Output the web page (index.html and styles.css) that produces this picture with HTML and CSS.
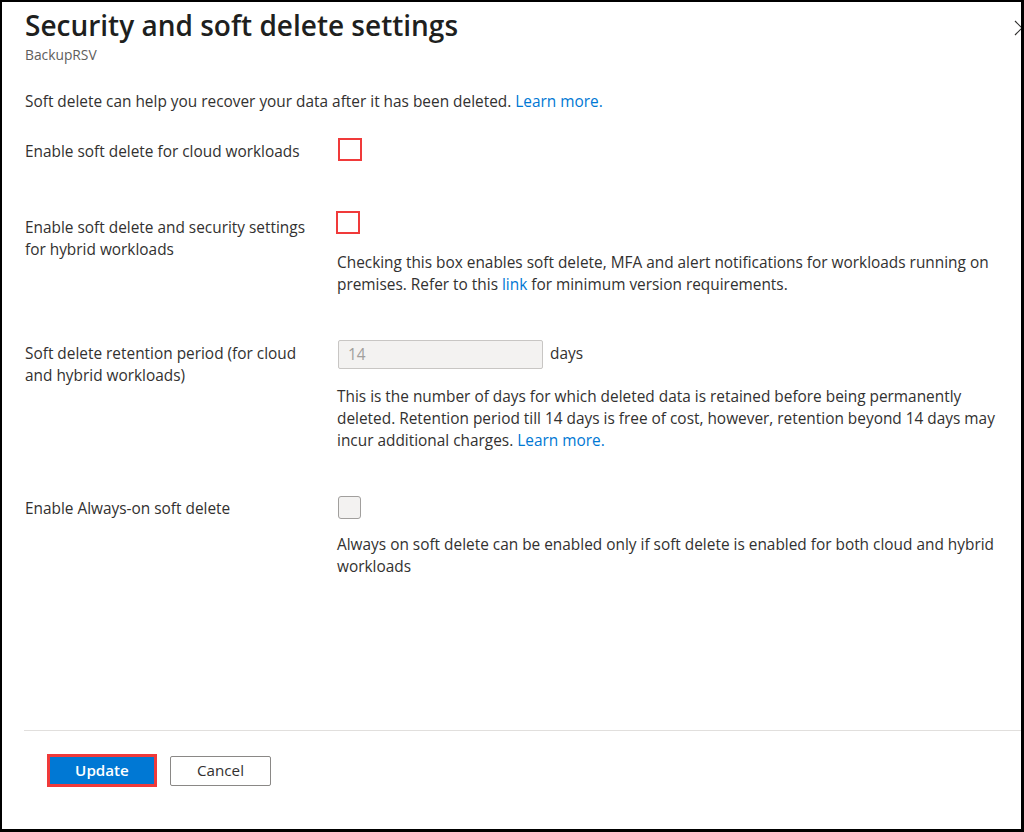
FILE: index.html
```html
<!DOCTYPE html>
<html lang="en">
<head>
<meta charset="utf-8">
<title>Security and soft delete settings</title>
<link rel="stylesheet" href="styles.css">
</head>
<body>
<div class="frame">
  <svg class="close" width="16" height="16" viewBox="0 0 16 16" aria-hidden="true">
    <path d="M1 1 L15 15 M15 1 L1 15" stroke="#323130" stroke-width="1.2" fill="none"/>
  </svg>
  <div class="content">
    <h1 class="title">Security and soft delete settings</h1>
    <div class="subtitle">BackupRSV</div>
    <p class="intro">Soft delete can help you recover your data after it has been deleted. <a class="link" href="#">Learn more.</a></p>

    <div class="row row-cloud">
      <div class="label label-cloud">Enable soft delete for cloud workloads</div>
      <div class="control">
        <span class="check check-red check-cloud"></span>
      </div>
    </div>

    <div class="row row-hybrid">
      <div class="label label-hybrid">Enable soft delete and security settings for hybrid workloads</div>
      <div class="control">
        <span class="check check-red check-hybrid"></span>
        <p class="desc desc-hybrid">Checking this box enables soft delete, MFA and alert notifications for workloads running on premises. Refer to this <a class="link" href="#">link</a> for minimum version requirements.</p>
      </div>
    </div>

    <div class="row row-retention">
      <div class="label label-retention">Soft delete retention period (for cloud and hybrid workloads)</div>
      <div class="control">
        <div class="input-line">
          <div class="input">14</div>
          <span class="unit">days</span>
        </div>
        <p class="desc desc-retention">This is the number of days for which deleted data is retained before being permanently deleted. Retention period till 14 days is free of cost, however, retention beyond 14 days may incur additional charges. <a class="link" href="#">Learn more.</a></p>
      </div>
    </div>

    <div class="row row-always">
      <div class="label label-always">Enable Always-on soft delete</div>
      <div class="control">
        <span class="check check-disabled"></span>
        <p class="desc desc-always">Always on soft delete can be enabled only if soft delete is enabled for both cloud and hybrid workloads</p>
      </div>
    </div>
  </div>
  <div class="footer">
    <div class="btn-highlight"><button class="btn btn-primary">Update</button></div>
    <button class="btn btn-secondary">Cancel</button>
  </div>
</div>
</body>
</html>
```

FILE: styles.css
```css
* { box-sizing: border-box; }
html, body { margin: 0; padding: 0; background: #ffffff; }
body {
  font-family: "Open Sans", "Noto Sans", "Liberation Sans", sans-serif;
  font-size: 15.4px;
  color: #323130;
}
.frame {
  position: relative;
  width: 1024px;
  height: 832px;
  border-style: solid;
  border-color: #000;
  border-width: 2px 3px 3px 2px;
  overflow: hidden;
  display: flex;
  flex-direction: column;
}
.close {
  position: absolute;
  top: 18px;
  right: -9px;
}
.content {
  flex: 1;
  padding: 5px 0 0 23px;
}
.title {
  margin: 0;
  font-size: 28px;
  font-weight: 600;
  line-height: 36px;
  color: #201f1e;
}
.subtitle {
  margin-top: 4px;
  font-size: 13.8px;
  line-height: 16px;
  color: #605e5c;
}
.intro {
  margin: 28px 0 0;
  line-height: 22px;
}
.link { color: #0078d4; text-decoration: none; }
.row {
  display: grid;
  grid-template-columns: 312px 668px;
  align-items: start;
}
.label { line-height: 22px; }
.row-cloud { margin-top: 27px; }
.label-cloud { padding-top: 1px; }
.row-hybrid { margin-top: 50px; }
.label-hybrid { padding-top: 4px; width: 292px; }
.row-retention { margin-top: 46px; }
.label-retention { padding-top: 1px; width: 292px; }
.row-always { margin-top: 46px; }
.check {
  display: block;
  width: 24px;
  height: 23px;
  margin-top: -2px;
}
.check-red { border: 2px solid #f03a3a; background: #fff; }
.check-cloud { margin-left: 1px; }
.check-hybrid { margin-left: -1px; }
.check-disabled {
  width: 23px;
  height: 23px;
  margin-left: 1px;
  border: 1px solid #a19f9d;
  border-radius: 3px;
  background: #f3f2f1;
}
.desc {
  margin: 0;
  line-height: 22px;
}
.desc-hybrid { margin-top: 18px; }
.desc-retention { margin-top: 17px; }
.desc-always { margin-top: 15px; }
.input-line {
  display: flex;
  align-items: center;
  gap: 7px;
  margin-top: -2px;
}
.input {
  width: 205px;
  height: 29px;
  margin-left: 1px;
  border: 1px solid #c8c6c4;
  border-radius: 2px;
  background: #f3f2f1;
  color: #a19f9d;
  padding-left: 9px;
  line-height: 27px;
}
.unit { line-height: 22px; margin-top: -2px; }
.footer {
  height: 99px;
  margin-left: 22px;
  border-top: 1px solid #e1dfdd;
  display: flex;
  align-items: flex-start;
  padding: 23px 0 0 23px;
  gap: 13px;
}
.btn-highlight {
  border: 3px solid #f03a3a;
  display: flex;
}
.btn {
  font-family: inherit;
  font-size: 15.2px;
  line-height: 20px;
  margin: 0;
  padding: 0;
  cursor: pointer;
}
.btn-primary {
  width: 104px;
  height: 27px;
  padding-bottom: 2px;
  border: none;
  background: #0078d4;
  color: #fff;
  font-weight: 600;
}
.btn-secondary {
  margin-top: 2px;
  width: 101px;
  height: 30px;
  padding-bottom: 2px;
  border: 1px solid #8a8886;
  border-radius: 2px;
  background: #fff;
  color: #323130;
  font-weight: 400;
}
```
